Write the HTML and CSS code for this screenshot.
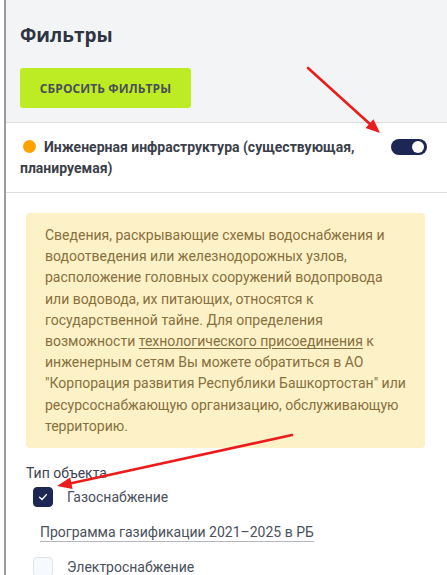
FILE: index.html
```html
<!DOCTYPE html>
<html lang="ru">
<head>
<meta charset="utf-8">
<link rel="stylesheet" href="styles.css">
</head>
<body>
<div class="panel">
  <div class="head">
    <h1 class="title">Фильтры</h1>
    <button class="reset">СБРОСИТЬ ФИЛЬТРЫ</button>
  </div>
  <div class="layer">
    <div class="layer-name"><span class="dot"></span>Инженерная инфраструктура (существующая, планируемая)</div>
    <span class="toggle"><span class="knob"></span></span>
  </div>
  <div class="content">
    <div class="notice">Сведения, раскрывающие схемы водоснабжения и водоотведения или железнодорожных узлов, расположение головных сооружений водопровода или водовода, их питающих, относятся к государственной тайне. Для определения возможности <a class="notice-link" href="#">технологического присоединения</a> к инженерным сетям Вы можете обратиться в АО "Корпорация развития Республики Башкортостан" или ресурсоснабжающую организацию, обслуживающую территорию.</div>
    <div class="group-label">Тип объекта</div>
    <label class="check-row">
      <span class="box checked"><svg width="10" height="8" viewBox="0 0 10 8"><path d="M1.5 4.2 L4 6.5 L8.5 1.5" fill="none" stroke="#fff" stroke-width="1.3" stroke-linecap="round" stroke-linejoin="round"/></svg></span>
      <span class="check-text">Газоснабжение</span>
    </label>
    <a class="program" href="#">Программа газификации 2021–2025 в РБ</a>
    <label class="check-row second">
      <span class="box"></span>
      <span class="check-text">Электроснабжение</span>
    </label>
  </div>
</div>
<svg class="arrows" width="447" height="575" viewBox="0 0 447 575">
  <line x1="308" y1="68" x2="371" y2="125" stroke="#ea1c1c" stroke-width="2.6" stroke-linecap="round"/>
  <polygon points="380,133 365.5,128 373.5,119.2" fill="#ea1c1c"/>
  <line x1="292" y1="435" x2="70" y2="483.5" stroke="#ea1c1c" stroke-width="2.6" stroke-linecap="round"/>
  <polygon points="57,486 70.2,477.6 72.6,489" fill="#ea1c1c"/>
</svg>
</body>
</html>
```

FILE: styles.css
```css
* { box-sizing: border-box; }
html, body { margin: 0; padding: 0; background: #fff; }
body {
  padding-left: 4px;
  font-family: Roboto, "Liberation Sans", sans-serif;
  height: 575px;
  overflow: hidden;
  position: relative;
}
.panel {
  border-left: 2px solid #9b9b9b;
  min-height: 575px;
}
.head {
  background: #f3f4f6;
  padding: 21px 14px 14px;
  border-bottom: 1px solid #dddddf;
}
.title {
  margin: 0;
  font-family: "Open Sans", sans-serif;
  font-size: 19px;
  line-height: 28px;
  font-weight: 700;
  color: #2e3441;
}
.reset {
  margin-top: 19px;
  display: block;
  width: 171px;
  height: 40px;
  border: 0;
  border-radius: 3px;
  background: #bdec24;
  color: #4a4e58;
  font-family: "Open Sans", sans-serif;
  font-weight: 700;
  font-size: 12px;
  letter-spacing: 0.1px;
  padding: 0;
}
.layer {
  display: flex;
  align-items: flex-start;
  padding: 14px 20px 13px 14px;
  border-bottom: 1px solid #dddddf;
}
.layer-name {
  flex: 1;
  font-weight: 700;
  font-size: 14px;
  line-height: 21px;
  color: #3a3f4a;
  padding-right: 20px;
}
.dot {
  display: inline-block;
  width: 13px;
  height: 13px;
  border-radius: 50%;
  background: #ffa200;
  margin: 0 8px 0 3px;
  vertical-align: -1px;
}
.toggle {
  margin-top: 2px;
  width: 36px;
  height: 16px;
  border-radius: 8px;
  background: #1c2753;
  display: flex;
  justify-content: flex-end;
  align-items: center;
  padding-right: 3px;
  flex-shrink: 0;
}
.knob {
  width: 12px;
  height: 12px;
  border-radius: 50%;
  background: #fff;
}
.content {
  padding: 20px 22px 0 20px;
}
.notice {
  background: #fdf1c8;
  border-radius: 4px;
  padding: 12px 16px 11px 19px;
  font-size: 14px;
  line-height: 21.2px;
  color: #87703c;
}
.notice-link {
  color: inherit;
  text-decoration: underline;
  text-underline-offset: 2px;
}
.group-label {
  margin-top: 15px;
  font-size: 14px;
  line-height: 20px;
  color: #3d4350;
}
.check-row {
  display: flex;
  align-items: center;
  gap: 14px;
  margin: 4px 0 0 7px;
}
.box {
  width: 20px;
  height: 20px;
  border-radius: 4px;
  border: 1px solid #dfe3ea;
  background: #f6f9fd;
  display: flex;
  align-items: center;
  justify-content: center;
  flex-shrink: 0;
}
.box.checked {
  background: #1c2753;
  border-color: #1c2753;
}
.check-text {
  font-size: 14px;
  line-height: 20px;
  color: #4a505c;
}
.program {
  display: inline-block;
  margin: 16px 0 0 14px;
  font-size: 14px;
  line-height: 18px;
  color: #4a505c;
  text-decoration: none;
  border-bottom: 1px solid #b4b6bb;
}
.check-row.second {
  margin-top: 15px;
}
.arrows {
  position: absolute;
  left: 0;
  top: 0;
  pointer-events: none;
}
```
